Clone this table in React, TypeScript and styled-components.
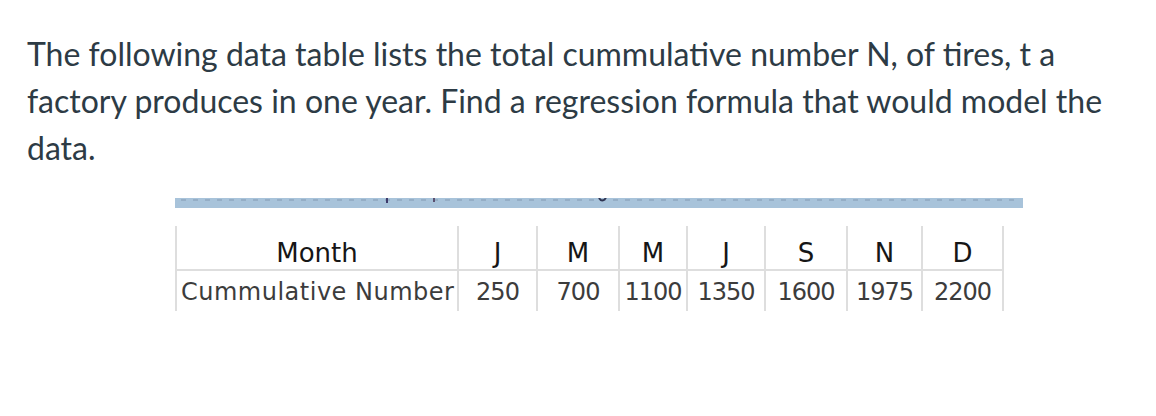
import React from 'react';
import styled, { createGlobalStyle } from 'styled-components';

const GlobalStyle = createGlobalStyle`
  body {
    margin: 0;
    background: #fff;
  }
`;

const Page = styled.div`
  padding: 30px 27px 0 27px;
  font-family: Lato, 'Open Sans', sans-serif;
  color: #2d3b45;
`;

const Question = styled.p`
  margin: 0;
  font-size: 32px;
  line-height: 47px;
  max-width: 1090px;
`;

const Figure = styled.div`
  margin: 27px 0 0 148px;
  width: 848px;
`;

const Strip = styled.svg`
  display: block;
  width: 848px;
  height: 10px;
`;

const Sheet = styled.table`
  margin-top: 18px;
  border-collapse: collapse;
  font-family: 'DejaVu Sans', Verdana, sans-serif;
`;

const Cell = styled.td<{ $w: number; $head?: boolean; $left?: boolean }>`
  width: ${(p) => p.$w}px;
  height: ${(p) => (p.$head ? 44 : 41)}px;
  box-sizing: border-box;
  padding: ${(p) => (p.$head ? '0 0 3px 0' : '9px 0 0 0')};
  padding-left: ${(p) => (p.$left ? 4 : 0)}px;
  text-align: ${(p) => (p.$left ? 'left' : 'center')};
  vertical-align: ${(p) => (p.$head ? 'bottom' : 'top')};
  font-size: ${(p) => (p.$head ? 26 : 24)}px;
  line-height: ${(p) => (p.$head ? 26 : 24)}px;
  letter-spacing: ${(p) => (p.$head ? 0 : p.$left ? 0.5 : -1)}px;
  color: ${(p) => (p.$head ? '#161616' : '#3c3c3c')};
  border-left: 2px solid #dedede;
  border-right: 2px solid #dedede;
  border-bottom: ${(p) => (p.$head ? '2px solid #dedede' : 'none')};
  white-space: nowrap;
  overflow: hidden;
`;

const widths = [282, 79, 82, 68, 78, 82, 75, 81];
const months = ['J', 'M', 'M', 'J', 'S', 'N', 'D'];
const totals = [250, 700, 1100, 1350, 1600, 1975, 2200];

const dashes = Array.from({ length: 70 }, (_, i) => 6 + i * 12);

export default function App() {
  return (
    <Page>
      <GlobalStyle />
      <Question>
        The following data table lists the total cummulative number N, of tires, t a
        factory produces in one year. Find a regression formula that would model the
        data.
      </Question>
      <Figure>
        <Strip viewBox="0 0 848 10">
          <rect x="0" y="0" width="848" height="10" fill="#a8c3da" />
          {dashes.map((x) => (
            <rect key={x} x={x} y="1" width="5" height="2" fill="#95aec6" />
          ))}
          <rect x="211" y="0" width="2" height="5" fill="#3d3a6a" />
          <rect x="258" y="0" width="2" height="4" fill="#5a5070" />
          <path d="M424 0 q3 5 7 0" stroke="#2e3350" strokeWidth="2" fill="none" />
        </Strip>
        <Sheet>
          <tbody>
            <tr>
              <Cell $w={widths[0]} $head>Month</Cell>
              {months.map((m, i) => (
                <Cell key={i} $w={widths[i + 1]} $head>
                  {m}
                </Cell>
              ))}
            </tr>
            <tr>
              <Cell $w={widths[0]} $left>Cummulative Number</Cell>
              {totals.map((n, i) => (
                <Cell key={i} $w={widths[i + 1]}>
                  {n}
                </Cell>
              ))}
            </tr>
          </tbody>
        </Sheet>
      </Figure>
    </Page>
  );
}
